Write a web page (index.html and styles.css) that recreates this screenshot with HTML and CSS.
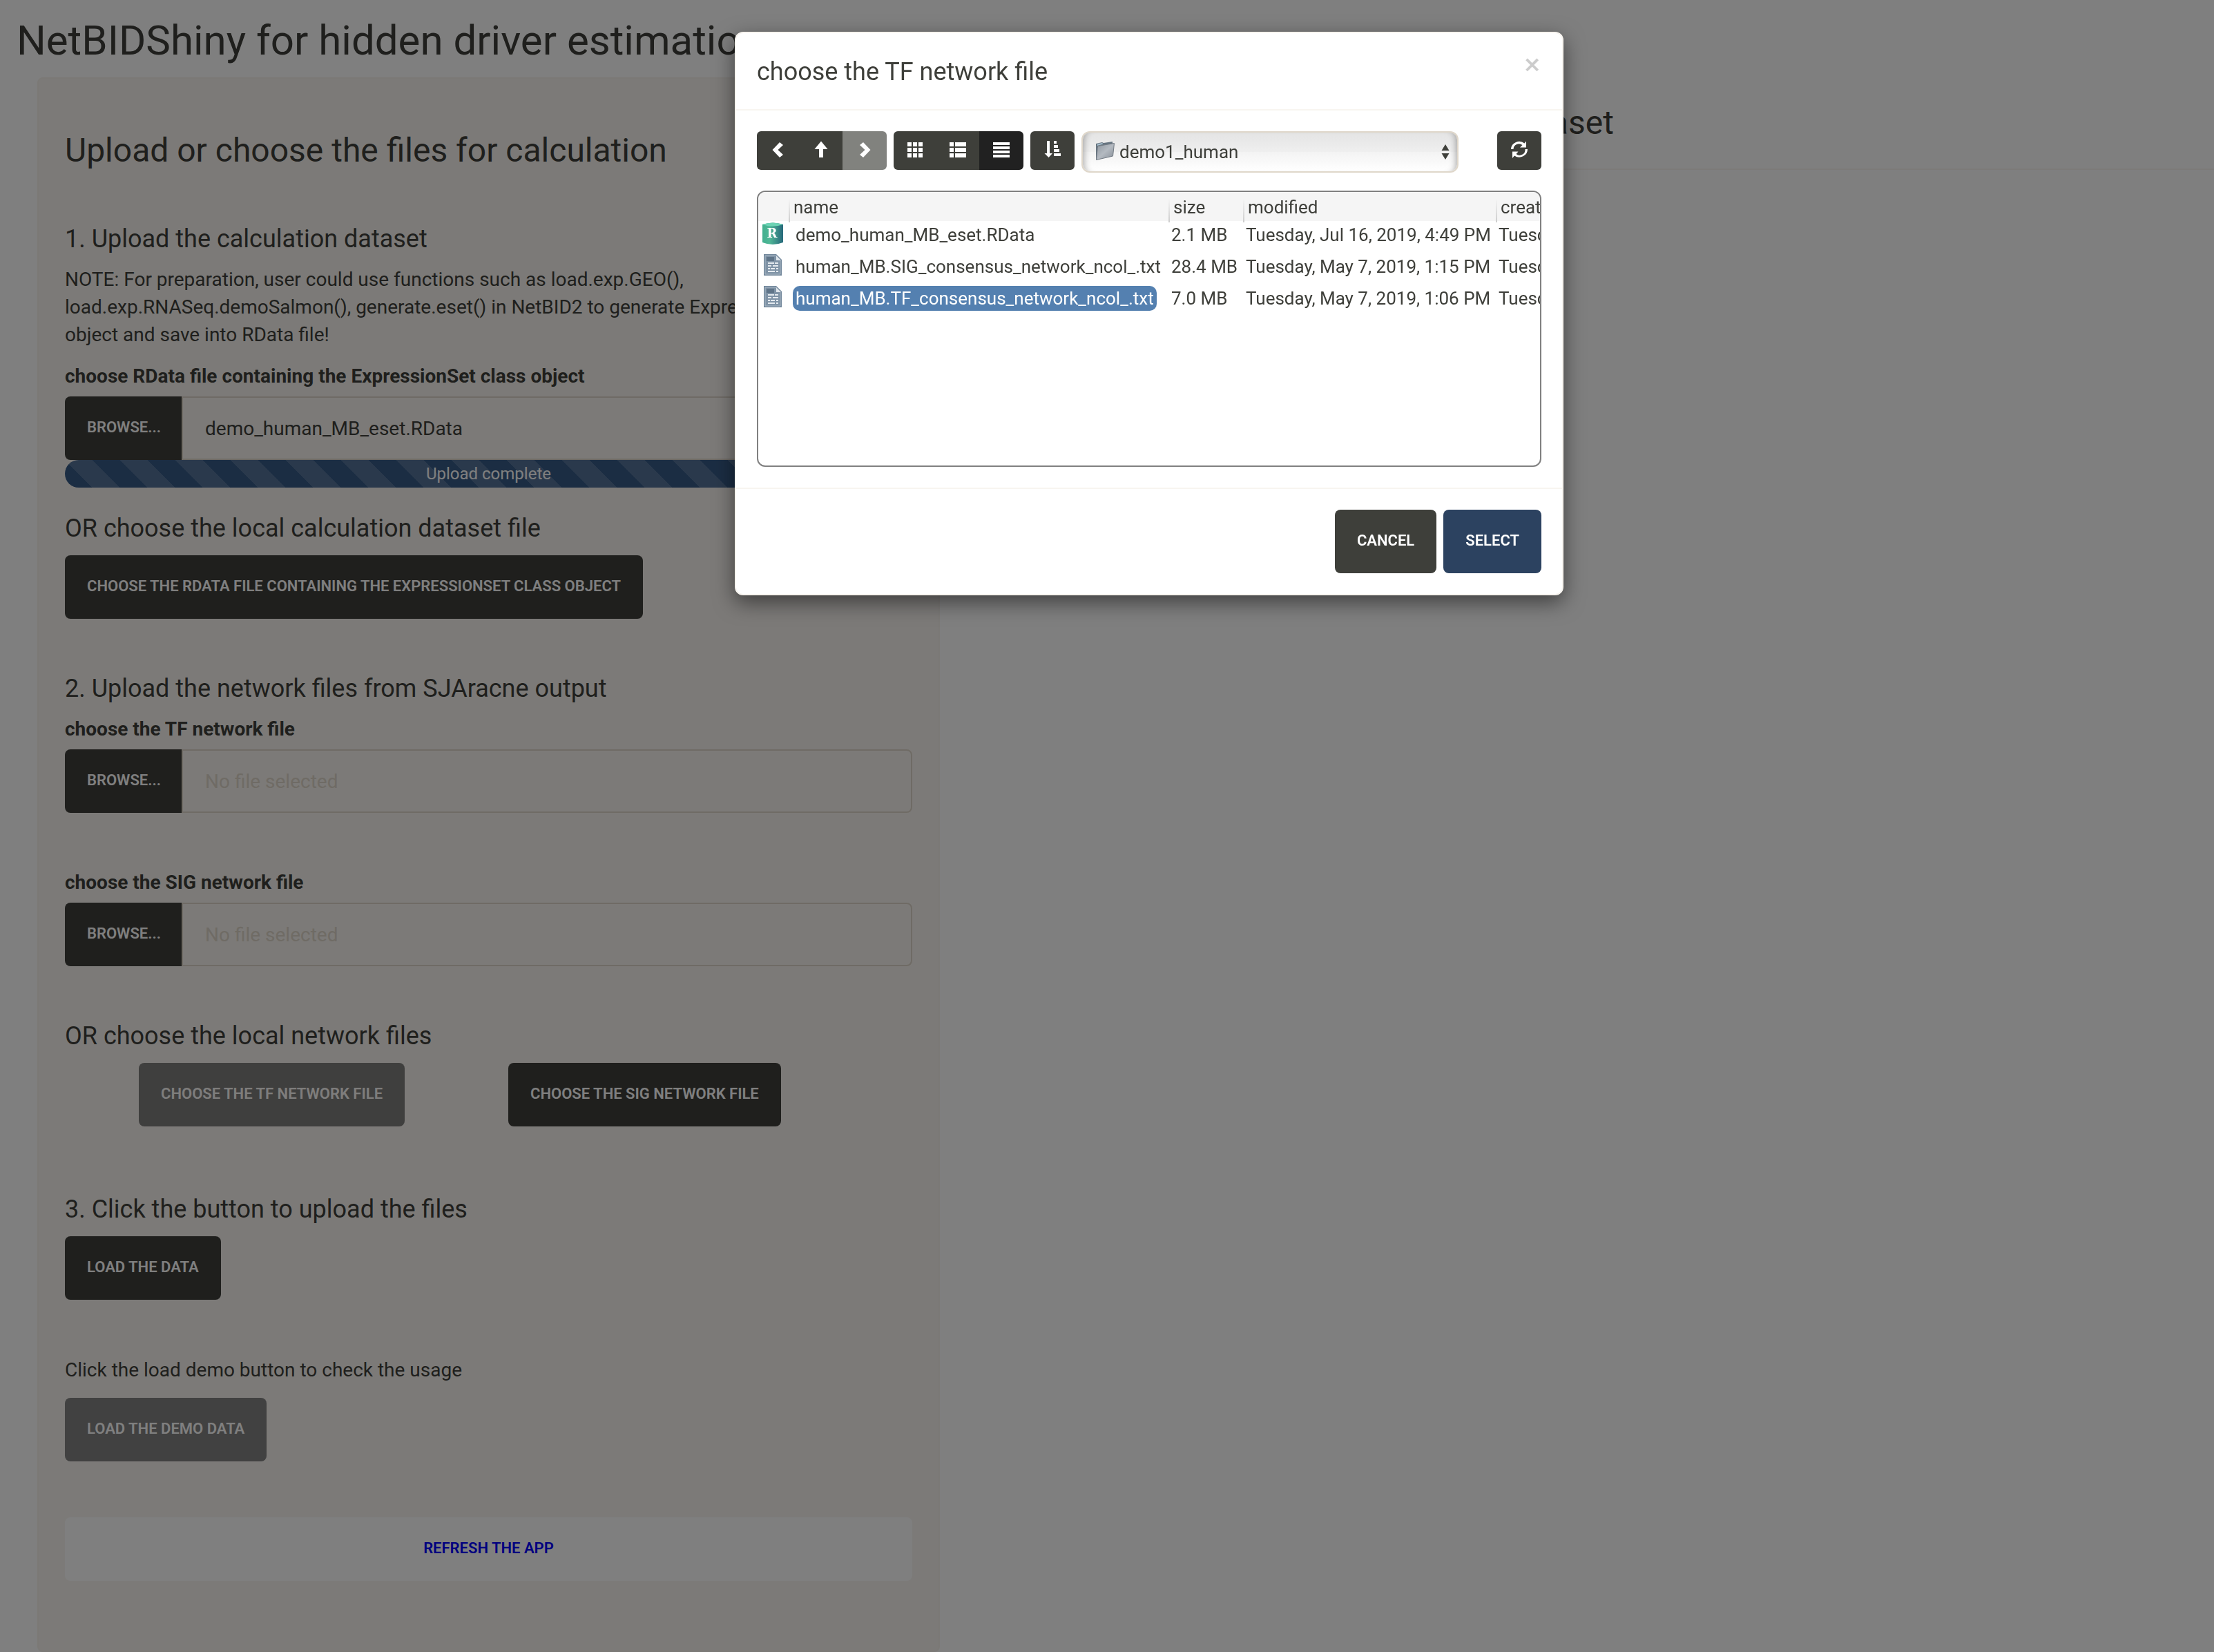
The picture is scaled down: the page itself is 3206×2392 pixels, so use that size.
FILE: index.html
```html
<!DOCTYPE html>
<html lang="en">
<head>
<meta charset="utf-8">
<title>NetBIDShiny</title>
<link rel="stylesheet" href="styles.css">
</head>
<body>
<div class="page">
  <h1 class="page-title">NetBIDShiny for hidden driver estimation</h1>
  <div class="layout">
    <aside class="sidebar">
      <div class="well">
        <h2 class="heading-lg">Upload or choose the files for calculation</h2>

        <section class="step">
          <h3 class="heading-md">1. Upload the calculation dataset</h3>
          <p class="note">NOTE: For preparation, user could use functions such as load.exp.GEO(),<br>load.exp.RNASeq.demoSalmon(), generate.eset() in NetBID2 to generate ExpressionSet<br>object and save into RData file!</p>
          <label class="field-label" for="eset-file">choose RData file containing the ExpressionSet class object</label>
          <div class="file-input">
            <button type="button" class="btn btn-browse">Browse...</button>
            <input class="file-name" id="eset-file" type="text" value="demo_human_MB_eset.RData" readonly>
          </div>
          <div class="progress">Upload complete</div>
          <h3 class="heading-md heading-after">OR choose the local calculation dataset file</h3>
          <button type="button" class="btn">Choose the RData file containing the ExpressionSet class object</button>
        </section>

        <section class="step">
          <h3 class="heading-md">2. Upload the network files from SJAracne output</h3>
          <label class="field-label" for="tf-file">choose the TF network file</label>
          <div class="file-input">
            <button type="button" class="btn btn-browse">Browse...</button>
            <input class="file-name" id="tf-file" type="text" placeholder="No file selected" readonly>
          </div>
        </section>

        <section class="step">
          <label class="field-label" for="sig-file">choose the SIG network file</label>
          <div class="file-input">
            <button type="button" class="btn btn-browse">Browse...</button>
            <input class="file-name" id="sig-file" type="text" placeholder="No file selected" readonly>
          </div>
        </section>

        <section class="step">
          <h3 class="heading-md">OR choose the local network files</h3>
          <div class="network-buttons">
            <button type="button" class="btn btn-disabled" disabled>Choose the TF network file</button>
            <button type="button" class="btn">Choose the SIG network file</button>
          </div>
        </section>

        <section class="step step-load">
          <h3 class="heading-md">3. Click the button to upload the files</h3>
          <button type="button" class="btn">Load the data</button>
        </section>

        <section class="step">
          <p class="note">Click the load demo button to check the usage</p>
          <button type="button" class="btn btn-active">Load the demo data</button>
        </section>

        <a class="btn btn-refresh" href="#">Refresh the app</a>
      </div>
    </aside>
    <main class="main">
      <h2 class="heading-lg main-heading">dataset</h2>
    </main>
  </div>
</div>

<div class="backdrop"></div>

<div class="modal" role="dialog" aria-labelledby="modal-title">
  <header class="modal-header">
    <h2 class="modal-title" id="modal-title">choose the TF network file</h2>
    <button type="button" class="close" aria-label="Close">×</button>
  </header>
  <div class="modal-body">
    <div class="toolbar">
      <div class="btn-group">
        <button type="button" class="tool" aria-label="Back"><svg class="icon" viewBox="0 0 24 24"><path d="M14 0l5 4-7.500 7 7.500 7-5 4L3.500 11z"/></svg></button>
        <button type="button" class="tool" aria-label="Up"><svg class="icon" viewBox="0 0 24 24"><path d="M12-1.500L21.500 10H15v12H9V10H2.500z"/></svg></button>
        <button type="button" class="tool btn-disabled" aria-label="Forward" disabled><svg class="icon" viewBox="0 0 24 24"><path d="M10 0L5 4l7.500 7L5 18l5 4 10.500-11z"/></svg></button>
      </div>
      <div class="btn-group">
        <button type="button" class="tool" aria-label="Icon view"><svg class="icon" viewBox="0 0 24 24"><path d="M1 0h6v6H1zM9 0h6v6H9zM17 0h6v6h-6zM1 8h6v6H1zM9 8h6v6H9zM17 8h6v6h-6zM1 16h6v6H1zM9 16h6v6H9zM17 16h6v6h-6z"/></svg></button>
        <button type="button" class="tool" aria-label="List view"><svg class="icon" viewBox="0 0 24 24"><path d="M0 0h6v6H0zM8 0h16v6H8zM0 8h6v6H0zM8 8h16v6H8zM0 16h6v6H0zM8 16h16v6H8z"/></svg></button>
        <button type="button" class="tool tool-active" aria-label="Detail view"><svg class="icon" viewBox="0 0 24 24"><path d="M0 0h24v4H0zM0 6h24v4H0zM0 12h24v4H0zM0 18h24v4H0z"/></svg></button>
      </div>
      <button type="button" class="tool tool-single" aria-label="Sort"><svg class="icon" viewBox="0 0 24 24"><path d="M4-2h4v18h4L6.500 22 .500 16H4zM14-2h4v4h-4zM14 4h6v4h-6zM14 10h8v4h-8zM14 16h10v4H14z"/></svg></button>
      <div class="volume">
        <svg class="folder" viewBox="0 0 28 28">
          <defs><linearGradient id="folder-front" x1="0" y1="0" x2="1" y2="1"><stop offset="0" stop-color="#8d959e"/><stop offset=".5" stop-color="#b4bac1"/><stop offset="1" stop-color="#858d96"/></linearGradient></defs>
          <path d="M1 3l9-2 2 1 13-2v4L3 9v17H1z" fill="#667480"/>
          <path d="M3 3.500l7-1.500 1.500 1.500L3 6z" fill="#a9c0cf"/>
          <path d="M3.500 6.500L27.500 2.500 25.500 21 1.500 26.500z" fill="url(#folder-front)" stroke="#737b84" stroke-width="1"/>
        </svg>
        <select class="volume-select" aria-label="Folder"><option>demo1_human</option></select>
        <svg class="arrows" viewBox="0 0 12 22"><path d="M6 0l5.500 9H.500zM6 22l5.500-9H.500z"/></svg>
      </div>
      <button type="button" class="tool tool-single" aria-label="Refresh"><svg class="icon" viewBox="0 0 24 24"><path d="M0 10A12 11.500 0 0 1 19.500 1.500L22-1.500V7.500H13L16.500 4A8 8 0 0 0 3.500 10zM24 10A12 11.500 0 0 1 5 19.500L2 23V13.500H10.500L7.500 17A8 8 0 0 0 20.500 10z"/></svg></button>
    </div>
    <div class="file-window">
      <table class="files">
        <colgroup><col class="col-icon"><col class="col-name"><col class="col-size"><col class="col-date"><col class="col-date"></colgroup>
        <thead>
          <tr><th></th><th>name</th><th>size</th><th>modified</th><th>created</th></tr>
        </thead>
        <tbody>
          <tr>
            <td class="cell-icon"><svg class="file-icon" viewBox="0 0 32 32">
              <defs><linearGradient id="r-body" x1="0" y1="0" x2="1" y2="0"><stop offset="0" stop-color="#43b08f"/><stop offset=".35" stop-color="#4fb796"/><stop offset="1" stop-color="#27697b"/></linearGradient></defs>
              <path d="M0 3Q15-2 30 3V29Q15 35 0 29z" fill="url(#r-body)"/>
              <path d="M0 3Q15-2 30 3Q15 8 0 3z" fill="#6cd3b4"/>
              <text class="r-letter" x="14" y="22">R</text>
            </svg></td>
            <td class="cell-name"><span class="file">demo_human_MB_eset.RData</span></td>
            <td>2.1 MB</td><td>Tuesday, Jul 16, 2019, 4:49 PM</td><td>Tuesday, Jul 16, 2019, 4:49 PM</td>
          </tr>
          <tr>
            <td class="cell-icon"><svg class="file-icon" viewBox="0 0 32 32">
              <path d="M2 0h18l8 8v23H2z" fill="#72879b"/>
              <path d="M4 2h15l7 7v20H4z" fill="#7f93a6" stroke="#a9b8c5" stroke-width="1"/>
              <path d="M6 4h11v6H6z" fill="#5f7488"/>
              <path d="M20 2v7h7z" fill="#dfe6ec"/>
              <path d="M8 12h9v2H8zM18 12h5v2h-5zM8 16h5v2H8zM15 16h8v2h-8zM8 20h3v2H8zM12 20h6v2h-6zM20 20h3v2h-3zM8 24h10v2H8zM20 24h3v2h-3z" fill="#e4eaef"/>
            </svg></td>
            <td class="cell-name"><span class="file">human_MB.SIG_consensus_network_ncol_.txt</span></td>
            <td>28.4 MB</td><td>Tuesday, May 7, 2019, 1:15 PM</td><td>Tuesday, May 7, 2019, 1:15 PM</td>
          </tr>
          <tr>
            <td class="cell-icon"><svg class="file-icon" viewBox="0 0 32 32">
              <path d="M2 0h18l8 8v23H2z" fill="#72879b"/>
              <path d="M4 2h15l7 7v20H4z" fill="#7f93a6" stroke="#a9b8c5" stroke-width="1"/>
              <path d="M6 4h11v6H6z" fill="#5f7488"/>
              <path d="M20 2v7h7z" fill="#dfe6ec"/>
              <path d="M8 12h9v2H8zM18 12h5v2h-5zM8 16h5v2H8zM15 16h8v2h-8zM8 20h3v2H8zM12 20h6v2h-6zM20 20h3v2h-3zM8 24h10v2H8zM20 24h3v2h-3z" fill="#e4eaef"/>
            </svg></td>
            <td class="cell-name"><span class="file file-selected">human_MB.TF_consensus_network_ncol_.txt</span></td>
            <td>7.0 MB</td><td>Tuesday, May 7, 2019, 1:06 PM</td><td>Tuesday, May 7, 2019, 1:06 PM</td>
          </tr>
        </tbody>
      </table>
    </div>
  </div>
  <footer class="modal-footer">
    <button type="button" class="btn">Cancel</button>
    <button type="button" class="btn btn-primary">Select</button>
  </footer>
</div>
</body>
</html>
```
FILE: styles.css
```css
* {
  box-sizing: border-box;
}

body {
  margin: 0;
  background: #fff;
  color: #3e3f3a;
  font-family: Roboto, "Liberation Sans", sans-serif;
  font-size: 28px;
  line-height: 40px;
  overflow: hidden;
}

h1, h2, h3, p {
  margin: 0;
  font-weight: 400;
}

button, input, select {
  font-family: inherit;
  color: inherit;
  margin: 0;
}

/* page */
.page {
  display: flex;
  flex-direction: column;
  height: 100vh;
}

.page-title {
  padding: 26px 24px 20px;
  font-size: 60px;
  line-height: 66px;
}

.layout {
  flex: 1;
  display: grid;
  grid-template-columns: 42.45% 1fr;
}

.sidebar {
  display: flex;
  padding-left: 54px;
}

.well {
  flex: 1;
  min-width: 0;
  padding: 77px 38px 100px;
  background: #f8f5f0;
  border: 2px solid #f6f2ec;
  border-radius: 8px;
}

.heading-lg {
  font-size: 48px;
  line-height: 54px;
}

.well > .heading-lg {
  margin-bottom: 81px;
}

.heading-md {
  margin-bottom: 19px;
  font-size: 36px;
  line-height: 40px;
}

.heading-after {
  margin-top: 39px;
}

.step {
  margin-bottom: 81px;
}

.step-load {
  margin: 100px 0 82px;
}

.note {
  margin-bottom: 20px;
}

.field-label {
  display: block;
  margin-bottom: 9px;
  font-weight: 700;
}

/* buttons */
.btn {
  display: inline-block;
  padding: 23px 32px 25px;
  border: 0;
  border-radius: 8px;
  background: #3e3f3a;
  color: #fff;
  font-size: 22px;
  font-weight: 600;
  line-height: 44px;
  text-align: center;
  text-decoration: none;
  text-transform: uppercase;
  vertical-align: top;
  white-space: nowrap;
}

.btn-disabled {
  background: #3f3f3f;
  opacity: .65;
}

.btn-active {
  background: #828282;
}

.btn-primary {
  background: #2c4260;
}

.btn-refresh {
  display: block;
  background: #fff;
  color: #00f;
}

.network-buttons {
  display: flex;
  gap: 150px;
  padding-left: 107px;
}

.file-input {
  display: flex;
}

.btn-browse {
  margin-right: -2px;
  border-radius: 8px 0 0 8px;
}

.file-name {
  flex: 1;
  min-width: 0;
  height: 92px;
  padding: 0 32px;
  border: 2px solid #dfd7ca;
  border-radius: 0 8px 8px 0;
  background: transparent;
  font-size: 28px;
}

.file-name::placeholder {
  color: #dfd7ca;
  opacity: 1;
}

.progress {
  height: 40px;
  border-radius: 20px;
  background-color: #375b87;
  background-image: linear-gradient(45deg, rgba(255, 255, 255, .15) 25%, transparent 25%, transparent 50%, rgba(255, 255, 255, .15) 50%, rgba(255, 255, 255, .15) 75%, transparent 75%);
  background-size: 80px 80px;
  color: #fff;
  font-size: 24px;
  text-align: center;
}

.main-heading {
  margin-left: 60px;
  padding: 39px 0 39px 755px;
  border-bottom: 2px solid #f8f5f0;
}

/* modal */
.backdrop {
  position: fixed;
  inset: 0;
  background: rgba(0, 0, 0, .5);
}

.modal {
  position: absolute;
  top: 46px;
  left: 1064px;
  width: 1200px;
  border: 2px solid #f8f5f0;
  border-radius: 12px;
  background: #fff;
  box-shadow: 0 10px 30px rgba(0, 0, 0, .5);
}

.modal-header {
  display: flex;
  justify-content: space-between;
  align-items: flex-start;
  padding: 30px 30px 28px;
  border-bottom: 2px solid #f8f5f0;
}

.modal-title {
  font-size: 36px;
  line-height: 52px;
}

.close {
  padding: 0;
  border: 0;
  background: none;
  color: #ccc;
  font-family: "DejaVu Sans", sans-serif;
  font-size: 32px;
  font-weight: 700;
  line-height: 30px;
}

.modal-body {
  padding: 30px;
}

.toolbar {
  display: flex;
  align-items: flex-start;
  gap: 10px;
  margin-bottom: 26px;
}

.btn-group {
  display: flex;
  overflow: hidden;
  border-radius: 6px;
}

.tool {
  display: flex;
  align-items: center;
  justify-content: center;
  width: 62px;
  height: 56px;
  padding: 0;
  border: 0;
  background: #3e3f3a;
  color: #fff;
}

.tool:last-child {
  width: 64px;
}

.tool-active {
  background: #212121;
}

.tool-single {
  width: 64px;
  border-radius: 6px;
}

.icon {
  width: 24px;
  height: 24px;
  overflow: visible;
  fill: currentColor;
}

.volume {
  position: relative;
  flex: 1;
  margin-right: 46px;
}

.volume-select {
  display: block;
  width: 100%;
  height: 60px;
  padding: 0 50px 0 53px;
  appearance: none;
  border: 2px solid #dfd7ca;
  border-radius: 12px;
  background: linear-gradient(#e4e4e4, #efefef 50%, #f3f3f3 50%, #fff);
  box-shadow: inset 10px 0 10px -8px rgba(0, 0, 0, .3), inset -10px 0 10px -8px rgba(0, 0, 0, .3);
  font-size: 26px;
}

.folder {
  position: absolute;
  top: 15px;
  left: 20px;
  width: 28px;
  height: 28px;
}

.arrows {
  position: absolute;
  top: 19px;
  right: 13px;
  width: 12px;
  height: 22px;
  fill: #3e3f3a;
}

.file-window {
  height: 400px;
  overflow: hidden;
  border: 2px solid #808080;
  border-radius: 12px;
}

.files {
  width: 1436px;
  table-layout: fixed;
  border-collapse: separate;
  border-spacing: 0;
  font-size: 26px;
  line-height: 36px;
  white-space: nowrap;
}

.col-icon {
  width: 46px;
}

.col-name {
  width: 550px;
}

.col-size {
  width: 108px;
}

.col-date {
  width: 366px;
}

.files thead tr {
  background: linear-gradient(#f5f5f5 42px, #fff 42px);
}

.files th {
  height: 44px;
  padding: 4px 0 4px 5px;
  background: linear-gradient(transparent 10px, #ccc) right / 2px 100% no-repeat;
  font-weight: 400;
  text-align: left;
}

.files td {
  height: 46px;
  padding: 0 0 0 2px;
  vertical-align: top;
}

.files .cell-icon {
  padding-left: 6px;
}

.files .cell-name {
  padding-left: 4px;
}

.file {
  display: inline-block;
  padding: 0 4px;
  border-radius: 10px;
}

.file-selected {
  background: #5480b0;
  color: #fff;
}

.file-icon {
  display: block;
  width: 32px;
  height: 32px;
}

.r-letter {
  fill: #fff;
  font: 700 18px "DejaVu Serif", serif;
  text-anchor: middle;
}

.modal-footer {
  display: flex;
  justify-content: flex-end;
  gap: 10px;
  padding: 30px;
  border-top: 2px solid #f8f5f0;
}
```
